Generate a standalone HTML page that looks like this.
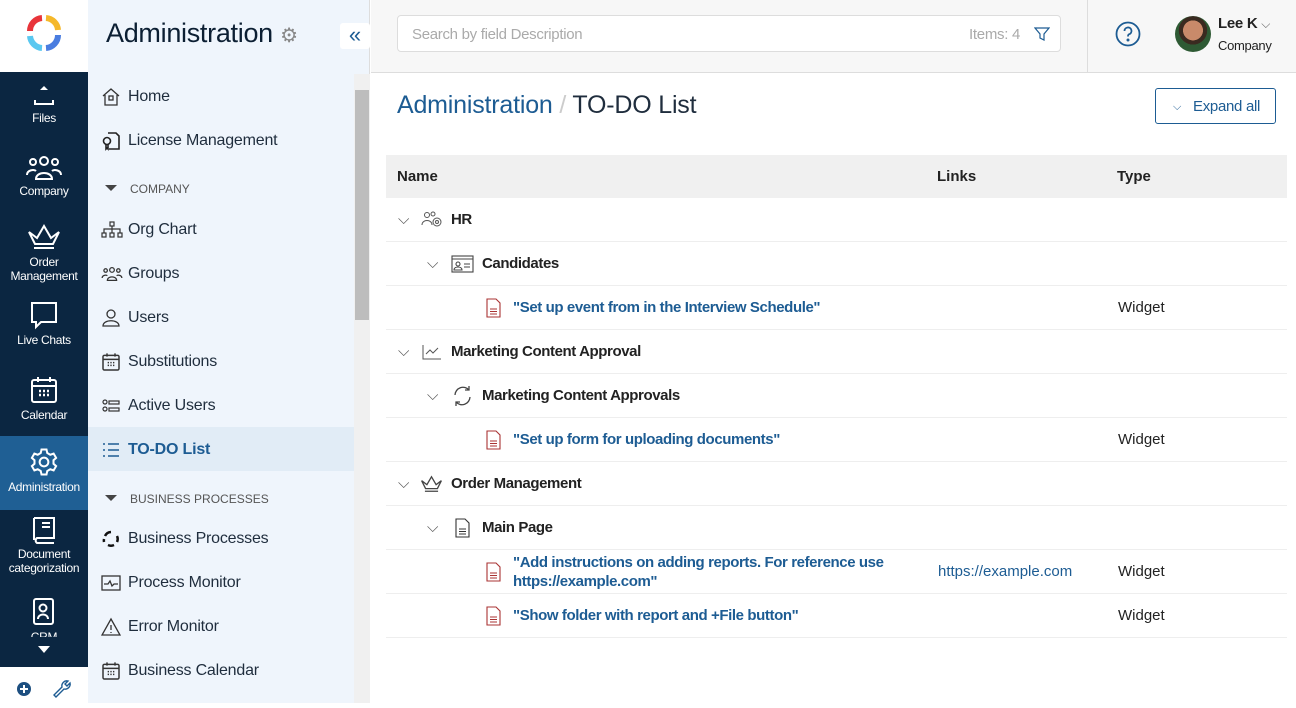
<!DOCTYPE html>
<html><head><meta charset="utf-8"><style>
*{box-sizing:border-box;margin:0;padding:0}
body{width:1296px;height:703px;overflow:hidden;font-family:"Liberation Sans",sans-serif;background:#fff;position:relative;color:#222}
.rail{position:absolute;left:0;top:0;width:88px;height:703px;background:#0b2641}
.logo{position:absolute;left:0;top:0;width:88px;height:72px;background:#fff}
.ri{position:absolute;left:0;width:88px;text-align:center;color:#fff;font-size:12px;letter-spacing:-.3px;line-height:14px}
.ri svg{display:block;margin:0 auto 3px}
.bot{position:absolute;left:0;top:667px;width:88px;height:36px;background:#fff}
.side{position:absolute;left:88px;top:0;width:282px;height:703px;background:#eff5fc;border-right:1px solid #ddd}
.side h1{position:absolute;left:18px;top:18px;font-size:27px;font-weight:normal;color:#0c1f33;letter-spacing:-.3px}
.coll{position:absolute;left:252px;top:23px;width:30px;height:26px;background:#fff;color:#1d5c93;font-size:22px;text-align:center;line-height:24px;border-radius:3px}
.scroll{position:absolute;left:266px;top:74px;width:16px;height:629px;background:#f0f0f0}
.thumb{position:absolute;left:267px;top:90px;width:14px;height:230px;background:#bdbdbd}
.it{position:absolute;left:0;width:266px;height:44px;line-height:46px;padding-left:40px;font-size:16px;color:#1f2d3d;letter-spacing:-.2px}
.it svg{position:absolute;left:13px;top:13px}
.it.act{background:#e1ecf6;color:#1d5c93;font-weight:bold}
.sec{position:absolute;left:42px;font-size:12px;color:#555}
.sec:before{content:"";position:absolute;left:-25px;top:3px;border:6px solid transparent;border-top:6px solid #444;border-bottom:0}
.top{position:absolute;left:371px;top:0;width:925px;height:73px;background:#f7f7f7;border-bottom:1px solid #ddd}
.search{position:absolute;left:26px;top:15px;width:664px;height:37px;background:#fff;border:1px solid #ddd;border-radius:4px;font-size:15px;color:#aaa;line-height:37px;padding-left:14px;letter-spacing:-.3px}
.title{position:absolute;left:397px;top:91px;font-size:25px;color:#1f2d3d;letter-spacing:-.2px}
.btn{position:absolute;left:1155px;top:88px;width:121px;height:36px;border:1px solid #1d5c93;border-radius:3px;color:#1d5c93;font-size:15px;line-height:36px;padding-left:37px;letter-spacing:-.3px}
.th{position:absolute;left:386px;top:155px;width:901px;height:43px;background:#f0f0f0;font-size:15px;font-weight:bold;line-height:43px}
.row{position:absolute;left:386px;width:901px;height:44px;border-bottom:1px solid #eee;font-size:15px;font-weight:bold;letter-spacing:-.4px}
.row span{position:absolute;top:0;line-height:44px}
.row .l{color:#1d5c93}
.row svg{position:absolute}
.typ{left:732px;font-weight:normal;letter-spacing:0}
</style></head><body>
<div class="rail">
<div class="logo"><svg width="88" height="72" viewBox="0 0 88 72"><g fill="none" stroke-width="6"><path d="M30 31a13 13 0 0 1 12-13" stroke="#e8343a"/><path d="M46 18a13 13 0 0 1 12 12" stroke="#f5b82a"/><path d="M58 35a13 13 0 0 1-12 13" stroke="#4a7de0"/><path d="M42 48a13 13 0 0 1-12-12" stroke="#5ac8f0"/></g></svg></div>
<div class="ri" style="top:84px"><svg width="24" height="24" viewBox="0 0 24 24"><path d="M8 6l4-4 4 4z" fill="#fff"/><path d="M3 16v4h18v-4" stroke="#fff" stroke-width="2" fill="none"/></svg>Files</div>
<div class="ri" style="top:155px"><svg width="38" height="26" viewBox="0 0 38 26" fill="none" stroke="#fff" stroke-width="2"><circle cx="19" cy="6" r="4"/><circle cx="8" cy="7" r="3"/><circle cx="30" cy="7" r="3"/><path d="M11 24c0-8 16-8 16 0zM2 20c0-5 7-6 9-4M36 20c0-5-7-6-9-4"/></svg>Company</div>
<div class="ri" style="top:222px"><svg width="38" height="30" viewBox="0 0 38 30" fill="none" stroke="#fff" stroke-width="2"><path d="M4 10l6 12h18l6-12-8 6-7-12-7 12z M9 26h20"/></svg>Order<br>Management</div>
<div class="ri" style="top:300px"><svg width="30" height="30" viewBox="0 0 30 30" fill="none" stroke="#fff" stroke-width="2"><path d="M3 3h24v19H12l-5 5v-5H3z"/></svg>Live Chats</div>
<div class="ri" style="top:375px"><svg width="28" height="30" viewBox="0 0 28 30" fill="none" stroke="#fff" stroke-width="2"><rect x="2" y="5" width="24" height="22" rx="2"/><path d="M8 2v5M20 2v5M2 11h24"/><path d="M9 16h2M13 16h2M17 16h2M9 20h2M13 20h2M17 20h2" stroke-width="2.5"/></svg>Calendar</div>
<div class="ri" style="top:436px;height:74px;background:#1f5f94;padding-top:11px"><svg width="30" height="30" viewBox="0 0 24 24" fill="none" stroke="#fff" stroke-width="1.6"><circle cx="12" cy="12" r="3.5"/><path d="M10 2h4l.6 2.8 2.4 1.4 2.7-.9 2 3.4-2.1 1.9v2.8l2.1 1.9-2 3.4-2.7-.9-2.4 1.4L14 22h-4l-.6-2.8-2.4-1.4-2.7.9-2-3.4 2.1-1.9v-2.8L2.3 8.7l2-3.4 2.7.9 2.4-1.4z"/></svg>Administration</div>
<div class="ri" style="top:514px"><svg width="28" height="30" viewBox="0 0 28 30" fill="none" stroke="#fff" stroke-width="2"><path d="M4 4h20v20H7a3 3 0 0 0 0 5h17M4 4v22M12 9h8M12 13h8"/></svg>Document<br>categorization</div>
<div class="ri" style="top:597px;height:40px;overflow:hidden"><svg width="26" height="30" viewBox="0 0 26 30" fill="none" stroke="#fff" stroke-width="2"><rect x="3" y="2" width="19" height="25" rx="2"/><circle cx="12" cy="11" r="3.5"/><path d="M7 22c0-6 10-6 10 0"/></svg>CRM</div>
<svg style="position:absolute;left:38px;top:646px" width="12" height="8"><path d="M0 0h12L6 7z" fill="#fff"/></svg>
<div class="bot"><svg width="88" height="36"><circle cx="24" cy="22" r="7" fill="#1d4f80"/><path d="M20 22h8M24 18v8" stroke="#fff" stroke-width="2"/><path d="M56 30l8-8a5 5 0 0 0 6-6l-3 3-2-2 3-3a5 5 0 0 0-6 6l-8 8z" fill="none" stroke="#1d5c93" stroke-width="1.4"/></svg></div>
</div>
<div class="side">
<h1>Administration <span style="font-size:20px;color:#888">⚙</span></h1>
<div class="coll">«</div>
<div class="scroll"></div><div class="thumb"></div>
<div class="it" style="top:74px"><svg width="20" height="20" viewBox="0 0 20 20" fill="none" stroke="#333" stroke-width="1.3"><path d="M2 9l8-7 8 7M4 8v10h12V8"/><rect x="8" y="9" width="4" height="4"/></svg>Home</div>
<div class="it" style="top:118px"><svg width="20" height="20" viewBox="0 0 20 20" fill="none" stroke="#222" stroke-width="1.6"><path d="M7 2h8l3 3v13H8"/><circle cx="6" cy="10" r="3.5"/><path d="M5 13v5l1-1 1 1v-5"/></svg>License Management</div>
<div class="sec" style="top:182px">COMPANY</div>
<div class="it" style="top:207px"><svg width="22" height="20" viewBox="0 0 22 20" fill="none" stroke="#333" stroke-width="1.2"><rect x="9" y="2" width="4" height="4"/><rect x="1" y="13" width="4" height="4"/><rect x="9" y="13" width="4" height="4"/><rect x="17" y="13" width="4" height="4"/><path d="M11 6v7M3 13V9h16v4"/></svg>Org Chart</div>
<div class="it" style="top:251px"><svg width="22" height="20" viewBox="0 0 38 26" fill="none" stroke="#333" stroke-width="2.2"><circle cx="19" cy="6" r="4"/><circle cx="8" cy="7" r="3"/><circle cx="30" cy="7" r="3"/><path d="M11 24c0-8 16-8 16 0zM2 20c0-5 7-6 9-4M36 20c0-5-7-6-9-4"/></svg>Groups</div>
<div class="it" style="top:295px"><svg width="20" height="20" viewBox="0 0 20 20" fill="none" stroke="#333" stroke-width="1.3"><circle cx="10" cy="6" r="4"/><path d="M2 18c0-7 16-7 16 0z"/></svg>Users</div>
<div class="it" style="top:339px"><svg width="20" height="20" viewBox="0 0 28 30" fill="none" stroke="#333" stroke-width="2.2"><rect x="2" y="5" width="24" height="22" rx="2"/><path d="M8 2v5M20 2v5M2 11h24M9 16h2M13 16h2M17 16h2M9 20h2M13 20h2M17 20h2"/></svg>Substitutions</div>
<div class="it" style="top:383px"><svg width="20" height="20" viewBox="0 0 20 20" fill="none" stroke="#333" stroke-width="1.2"><circle cx="4" cy="6" r="2"/><circle cx="4" cy="13" r="2"/><rect x="8" y="5" width="10" height="3"/><rect x="8" y="12" width="10" height="3"/></svg>Active Users</div>
<div class="it act" style="top:427px"><svg width="20" height="20" viewBox="0 0 20 20" stroke="#1d5c93" stroke-width="1.5"><path d="M2 4h2M2 10h2M2 16h2M7 4h11M7 10h11M7 16h11"/></svg>TO-DO List</div>
<div class="sec" style="top:492px">BUSINESS PROCESSES</div>
<div class="it" style="top:516px"><svg width="20" height="20" viewBox="0 0 20 20" fill="none" stroke="#111" stroke-width="2.5"><path d="M4 7a7 7 0 0 1 6-4M16 7a7 7 0 0 1 0 6M13 16a7 7 0 0 1-6 0M3 13a7 7 0 0 1 0-3"/></svg>Business Processes</div>
<div class="it" style="top:560px"><svg width="20" height="20" viewBox="0 0 20 20" fill="none" stroke="#333" stroke-width="1.3"><rect x="1" y="3" width="18" height="14"/><path d="M3 11h4l2-3 2 5 2-2h4"/></svg>Process Monitor</div>
<div class="it" style="top:604px"><svg width="20" height="20" viewBox="0 0 20 20" fill="none" stroke="#333" stroke-width="1.3"><path d="M10 2l9 16H1z M10 8v5M10 15v1"/></svg>Error Monitor</div>
<div class="it" style="top:648px"><svg width="20" height="20" viewBox="0 0 28 30" fill="none" stroke="#333" stroke-width="2.2"><rect x="2" y="5" width="24" height="22" rx="2"/><path d="M8 2v5M20 2v5M2 11h24M9 16h2M13 16h2M17 16h2M9 20h2M13 20h2M17 20h2"/></svg>Business Calendar</div>
</div>
<div class="top">
<div class="search">Search by field Description<span style="position:absolute;right:40px;color:#aaa">Items: 4</span><svg style="position:absolute;right:10px;top:10px" width="16" height="16" viewBox="0 0 16 16" fill="none" stroke="#1d5c93" stroke-width="1.2"><path d="M1 2h14l-5 6v6l-4-2V8z"/></svg></div>
<div style="position:absolute;left:716px;top:0;width:1px;height:72px;background:#ddd"></div>
<svg style="position:absolute;left:744px;top:21px" width="26" height="26" viewBox="0 0 26 26" fill="none" stroke="#1d5c93" stroke-width="1.8"><circle cx="13" cy="13" r="11.5"/><path d="M9.5 10a3.5 3.5 0 1 1 4.5 3.3c-1 .4-1 1-1 2.2" /><circle cx="13" cy="19" r=".6" fill="#1d5c93"/></svg>
<div style="position:absolute;left:804px;top:16px;width:36px;height:36px;border-radius:50%;background:radial-gradient(circle at 50% 40%,#c98a6a 0 35%,#3a2a20 36% 50%,#2e5a34 51%)"></div>
<div style="position:absolute;left:847px;top:15px;font-size:15px;font-weight:bold;color:#222;letter-spacing:-.3px">Lee K <span style="font-weight:normal;color:#666;font-size:12px">⌵</span></div>
<div style="position:absolute;left:847px;top:38px;font-size:13px;color:#222;letter-spacing:-.3px">Company</div>
</div>
<div class="title"><span style="color:#1d5c93">Administration</span> <span style="color:#ccc">/</span> TO-DO List</div>
<div class="btn"><span style="position:absolute;left:17px;font-size:11px">⌵</span>Expand all</div>
<div class="th"><span style="position:absolute;left:11px">Name</span><span style="position:absolute;left:551px">Links</span><span style="position:absolute;left:731px">Type</span></div>
<div class="row" style="top:198px"><span style="left:12px;font-weight:normal;color:#555">⌵</span><svg style="left:35px;top:13px" width="22" height="18" viewBox="0 0 22 18" fill="none" stroke="#555" stroke-width="1"><circle cx="6" cy="4" r="2.5"/><circle cx="12" cy="3" r="2"/><path d="M1 14c0-6 10-6 10 0"/><circle cx="16" cy="11" r="4"/><circle cx="16" cy="11" r="1.5"/></svg><span style="left:65px">HR</span></div>
<div class="row" style="top:242px"><span style="left:41px;font-weight:normal;color:#555">⌵</span><svg style="left:65px;top:13px" width="23" height="18" viewBox="0 0 23 18" fill="none" stroke="#444" stroke-width="1.1"><rect x="1" y="1" width="21" height="16"/><path d="M1 4h21"/><circle cx="7" cy="9" r="2"/><path d="M3 15c0-4 8-4 8 0zM13 9h6M13 12h6"/></svg><span style="left:96px">Candidates</span></div>
<div class="row" style="top:286px"><svg style="left:100px;top:12px" width="15" height="20" viewBox="0 0 15 20" fill="none" stroke="#a33" stroke-width="1.1"><path d="M1 1h9l4 4v14H1z M4 11h7M4 13.5h7M4 16h7"/></svg><span class="l" style="left:127px">"Set up event from in the Interview Schedule"</span><span class="typ">Widget</span></div>
<div class="row" style="top:330px"><span style="left:12px;font-weight:normal;color:#555">⌵</span><svg style="left:36px;top:14px" width="20" height="16" viewBox="0 0 20 16" fill="none" stroke="#555" stroke-width="1"><path d="M1 1v14h18M4 10l4-4 3 3 5-5"/></svg><span style="left:65px">Marketing Content Approval</span></div>
<div class="row" style="top:374px"><span style="left:41px;font-weight:normal;color:#555">⌵</span><svg style="left:66px;top:11px" width="21" height="22" viewBox="0 0 21 22" fill="none" stroke="#444" stroke-width="1.3"><path d="M3 10a8 8 0 0 1 14-5M18 12a8 8 0 0 1-14 5M17 1v4h-4M4 21v-4h4"/></svg><span style="left:96px">Marketing Content Approvals</span></div>
<div class="row" style="top:418px"><svg style="left:100px;top:12px" width="15" height="20" viewBox="0 0 15 20" fill="none" stroke="#a33" stroke-width="1.1"><path d="M1 1h9l4 4v14H1z M4 11h7M4 13.5h7M4 16h7"/></svg><span class="l" style="left:127px">"Set up form for uploading documents"</span><span class="typ">Widget</span></div>
<div class="row" style="top:462px"><span style="left:12px;font-weight:normal;color:#555">⌵</span><svg style="left:33px;top:12px" width="25" height="20" viewBox="0 0 38 30" fill="none" stroke="#444" stroke-width="2"><path d="M4 10l6 12h18l6-12-8 6-7-12-7 12z M9 26h20"/></svg><span style="left:65px">Order Management</span></div>
<div class="row" style="top:506px"><span style="left:41px;font-weight:normal;color:#555">⌵</span><svg style="left:69px;top:12px" width="15" height="20" viewBox="0 0 15 20" fill="none" stroke="#333" stroke-width="1.1"><path d="M1 1h9l4 4v14H1z M4 11h7M4 13.5h7M4 16h7"/></svg><span style="left:96px">Main Page</span></div>
<div class="row" style="top:550px"><svg style="left:100px;top:12px" width="15" height="20" viewBox="0 0 15 20" fill="none" stroke="#a33" stroke-width="1.1"><path d="M1 1h9l4 4v14H1z M4 11h7M4 13.5h7M4 16h7"/></svg><span class="l" style="left:127px;line-height:19px;top:3px">"Add instructions on adding reports. For reference use<br>https://example.com"</span><span class="l" style="left:552px;font-weight:normal;letter-spacing:0">https://example.com</span><span class="typ">Widget</span></div>
<div class="row" style="top:594px"><svg style="left:100px;top:12px" width="15" height="20" viewBox="0 0 15 20" fill="none" stroke="#a33" stroke-width="1.1"><path d="M1 1h9l4 4v14H1z M4 11h7M4 13.5h7M4 16h7"/></svg><span class="l" style="left:127px">"Show folder with report and +File button"</span><span class="typ">Widget</span></div>
</body></html>
